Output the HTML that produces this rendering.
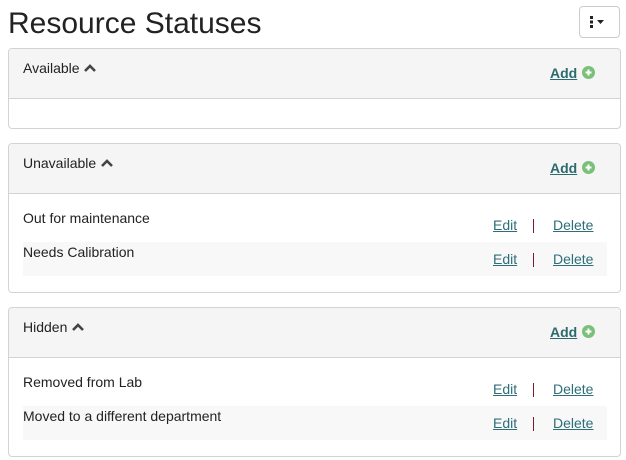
<!DOCTYPE html>
<html><head><style>
body{margin:0;background:#fff;font-family:"Liberation Sans",Arial,sans-serif;color:#222;width:626px;height:460px;overflow:hidden;position:relative}
h1{position:absolute;left:8px;top:7px;margin:0;font-size:30px;font-weight:400;color:#222}
.btn{position:absolute;left:579px;top:6px;width:41px;height:32px;border:1px solid #ccc;border-radius:4px;box-sizing:border-box;background:#fff}
.panel{position:absolute;left:8px;width:613px;border:1px solid #d3d3d3;border-radius:4px;box-sizing:border-box;overflow:hidden}
.hd{height:50px;background:#f5f5f5;border-bottom:1px solid #d3d3d3;position:relative;box-sizing:border-box}
.ttl{position:absolute;left:14px;top:11px;font-size:14px}
.add{position:absolute;left:541px;top:16px;font-size:14px;font-weight:bold;color:#2b6a6e;text-decoration:underline}
.plus{position:absolute;left:573px;top:17px}
.row{position:absolute;left:14px;width:584px;height:34px;font-size:14px}
.row.s{background:#f8f8f8}
.row .n{position:absolute;left:0;top:2px}
.row .e,.row .d{position:absolute;top:9px;color:#2d6e78;text-decoration:underline}
.row .e{left:470px}.row .d{left:530px}
.row .p{position:absolute;left:510px;top:11px;width:1px;height:14px;background:#7a1a2a}
</style></head><body>
<h1>Resource Statuses</h1>
<div class="btn"><svg width="41" height="32" style="position:absolute;left:-1px;top:-1px"><rect x="11" y="10" width="3" height="3" fill="#222"/><rect x="11" y="14.5" width="3" height="3" fill="#222"/><rect x="11" y="19" width="3" height="3" fill="#222"/><path d="M18 14h7l-3.5 4z" fill="#222"/></svg></div>

<div class="panel" style="top:48px;height:81px">
<div class="hd"><span class="ttl">Available <svg width="14" height="10" viewBox="0 0 14 10"><path d="M2 8l5-5 5 5" stroke="#444" stroke-width="2.6" fill="none"/></svg></span><span class="add">Add</span><svg class="plus" width="13" height="13"><circle cx="6.5" cy="6.5" r="6.5" fill="#7ac07a"/><path d="M6.5 3.5v6M3.5 6.5h6" stroke="#fff" stroke-width="2"/></svg></div>
</div>

<div class="panel" style="top:143px;height:150px">
<div class="hd"><span class="ttl">Unavailable <svg width="14" height="10" viewBox="0 0 14 10"><path d="M2 8l5-5 5 5" stroke="#444" stroke-width="2.6" fill="none"/></svg></span><span class="add">Add</span><svg class="plus" width="13" height="13"><circle cx="6.5" cy="6.5" r="6.5" fill="#7ac07a"/><path d="M6.5 3.5v6M3.5 6.5h6" stroke="#fff" stroke-width="2"/></svg></div>
<div class="row" style="top:64px"><span class="n">Out for maintenance</span><span class="e">Edit</span><span class="p"></span><span class="d">Delete</span></div>
<div class="row s" style="top:98px"><span class="n">Needs Calibration</span><span class="e">Edit</span><span class="p"></span><span class="d">Delete</span></div>
</div>

<div class="panel" style="top:307px;height:150px">
<div class="hd"><span class="ttl">Hidden <svg width="14" height="10" viewBox="0 0 14 10"><path d="M2 8l5-5 5 5" stroke="#444" stroke-width="2.6" fill="none"/></svg></span><span class="add">Add</span><svg class="plus" width="13" height="13"><circle cx="6.5" cy="6.5" r="6.5" fill="#7ac07a"/><path d="M6.5 3.5v6M3.5 6.5h6" stroke="#fff" stroke-width="2"/></svg></div>
<div class="row" style="top:64px"><span class="n">Removed from Lab</span><span class="e">Edit</span><span class="p"></span><span class="d">Delete</span></div>
<div class="row s" style="top:98px"><span class="n">Moved to a different department</span><span class="e">Edit</span><span class="p"></span><span class="d">Delete</span></div>
</div>
</body></html>
